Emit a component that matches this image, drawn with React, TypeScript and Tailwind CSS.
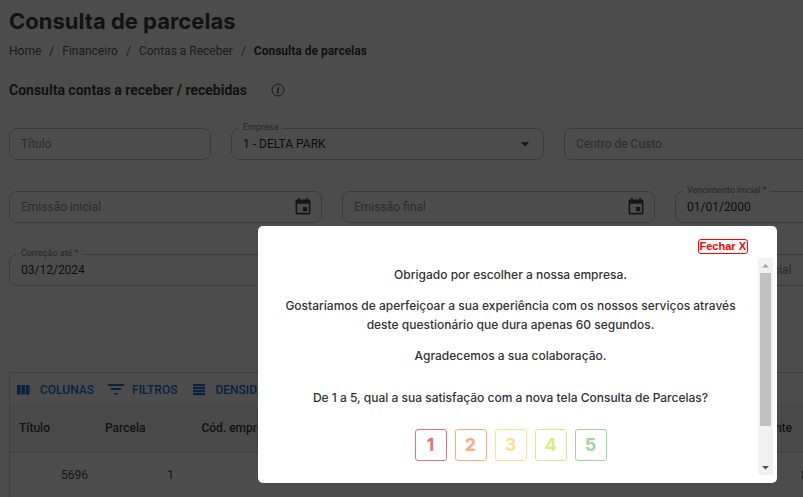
import type { ReactNode } from "react";
import { MdArrowDropDown, MdEvent } from "react-icons/md";

const roboto = "font-['Roboto','Liberation_Sans',sans-serif]";

type FieldProps = {
  id: string;
  label: string;
  value?: string;
  span: string;
  date?: boolean;
};

function FloatingLabel({ id, children }: { id: string; children: ReactNode }) {
  return (
    <label
      htmlFor={id}
      className="absolute -top-2 left-[7px] bg-white px-1 text-[9px] leading-3 text-[#808080]"
    >
      {children}
    </label>
  );
}

function Field({ id, label, value, span, date }: FieldProps) {
  return (
    <div className={`relative flex h-8 items-center rounded-lg border border-[#c4c4c4] ${span}`}>
      {value && <FloatingLabel id={id}>{label}</FloatingLabel>}
      <input
        id={id}
        type="text"
        aria-label={label}
        placeholder={value ? undefined : label}
        defaultValue={value}
        className="h-full min-w-0 flex-1 bg-transparent pl-[11px] text-xs text-[#303030] outline-none placeholder:text-[#949494]"
      />
      {date && (
        <button type="button" aria-label={`Escolher data: ${label}`} className="mr-2 text-[#4c4c4c]">
          <MdEvent className="size-5" />
        </button>
      )}
    </div>
  );
}

function ColumnsIcon() {
  return (
    <svg viewBox="0 0 16 16" className="size-4" fill="currentColor" aria-hidden="true">
      <path d="M1 3h3.700v9.500H1zM5.400 3h3.700v9.500H5.400zM9.800 3h3.700v9.500H9.800z" />
    </svg>
  );
}

function FilterIcon() {
  return (
    <svg viewBox="0 0 16 16" className="size-4" fill="currentColor" aria-hidden="true">
      <path d="M0 2h16v2H0zM3 6h10v2H3zM6 11h4v1.500H6z" />
    </svg>
  );
}

function DensityIcon() {
  return (
    <svg viewBox="0 0 16 16" className="size-4" fill="currentColor" aria-hidden="true">
      <path d="M2 2h12v2.200H2zM2 5h12v2.200H2zM2 8h12v2.200H2zM2 11h12v2.200H2z" />
    </svg>
  );
}

function ToolbarButton({ icon, children }: { icon: ReactNode; children: ReactNode }) {
  return (
    <button type="button" className="flex items-center gap-2 text-xs leading-4 font-medium text-[#1976d2]">
      {icon}
      {children}
    </button>
  );
}

const ratings = [
  { value: 1, style: "border-[#e57373] text-[#e57373]" },
  { value: 2, style: "border-[#ffab7d] text-[#ffab7d]" },
  { value: 3, style: "border-[#ffe08a] text-[#ffe08a]" },
  { value: 4, style: "border-[#dcea86] text-[#dcea86]" },
  { value: 5, style: "border-[#9fd39b] text-[#9fd39b]" },
];

function SurveyDialog() {
  return (
    <div className="fixed inset-0 flex items-end justify-end bg-black/70 pr-[26px] pb-3.5">
      <section
        role="dialog"
        aria-label="Pesquisa de satisfação"
        className="flex w-full max-w-[519px] flex-col rounded-[5px] bg-white pr-1 pb-2 pl-[5px] font-['Inter','Liberation_Sans',sans-serif] text-[#333]"
      >
        <div className="flex justify-end pt-[13px] pr-[25px] pb-1">
          <button
            type="button"
            className="rounded-[3px] border border-[#f00] px-px font-['Liberation_Sans',sans-serif] text-[11px] leading-[13px] font-bold text-[#f00]"
          >
            Fechar X
          </button>
        </div>
        <div className="flex">
          <div className="flex flex-1 flex-col items-center px-4 pt-[7px] text-center text-xs leading-[19px] font-medium">
            <p>Obrigado por escolher a nossa empresa.</p>
            <p className="mt-3">
              Gostaríamos de aperfeiçoar a sua experiência com os nossos serviços através deste questionário que dura
              apenas 60 segundos.
            </p>
            <p className="mt-3">Agradecemos a sua colaboração.</p>
            <p className="mt-[23px]">De 1 a 5, qual a sua satisfação com a nova tela Consulta de Parcelas?</p>
            <div className="mt-[22px] mb-3.5 flex gap-2">
              {ratings.map((r) => (
                <button
                  key={r.value}
                  type="button"
                  className={`size-8 rounded-[3px] border text-lg leading-none font-bold ${r.style}`}
                >
                  {r.value}
                </button>
              ))}
            </div>
          </div>
          <div className="flex w-[15px] flex-col items-center bg-[#f1f1f1]" aria-hidden="true">
            <svg viewBox="0 0 15 15" className="size-[15px]" fill="#a3a3a3">
              <path d="M4 9.500L7.500 6L11 9.500z" />
            </svg>
            <div className="w-[11px] flex-1 bg-[#c1c1c1]" />
            <svg viewBox="0 0 15 15" className="mt-[34px] size-[15px]" fill="#505050">
              <path d="M4 6L7.500 9.500L11 6z" />
            </svg>
          </div>
        </div>
      </section>
    </div>
  );
}

export default function App() {
  return (
    <div className={`h-screen overflow-hidden bg-white ${roboto} text-[#333]`}>
      <main className="min-w-[1321px] pt-2 pl-[9px]">
        <h1 className="font-['Inter','Liberation_Sans',sans-serif] text-[22px] leading-[26px] font-bold text-[#3c3c3c]">
          Consulta de parcelas
        </h1>
        <nav aria-label="Navegação" className="mt-2 flex gap-2 text-xs leading-[18px] text-[#606060]">
          <a href="#home">Home</a>
          <span>/</span>
          <a href="#financeiro">Financeiro</a>
          <span>/</span>
          <a href="#contas">Contas a Receber</a>
          <span>/</span>
          <span aria-current="page" className="font-bold text-[#3c3c3c]">
            Consulta de parcelas
          </span>
        </nav>
        <div className="mt-5 flex items-center gap-6">
          <h2 className="text-sm leading-5 font-bold text-[#3c3c3c]">Consulta contas a receber / recebidas</h2>
          <button type="button" aria-label="Informações" className="text-[#4c4c4c]">
            <svg viewBox="0 0 14 14" className="size-3.5" fill="none" stroke="currentColor" aria-hidden="true">
              <circle cx="7" cy="7" r="6" />
              <path d="M6.200 5.800h1.200L6.500 10h1M7.600 3.500l-.2 1" strokeWidth="1.200" />
            </svg>
          </button>
        </div>

        <form className="mt-7 grid grid-cols-12 gap-x-5 gap-y-[31px]">
          <Field id="titulo" label="Título" span="col-span-2" />
          <div className="relative col-span-3 flex h-8 items-center rounded-lg border border-[#c4c4c4]">
            <FloatingLabel id="empresa">Empresa</FloatingLabel>
            <select
              id="empresa"
              className="h-full w-full appearance-none bg-transparent pl-[11px] text-xs text-[#303030] outline-none"
            >
              <option>1 - DELTA PARK</option>
            </select>
            <MdArrowDropDown className="pointer-events-none absolute right-2 size-5 text-[#4c4c4c]" />
          </div>
          <Field id="centro" label="Centro de Custo" span="col-span-3" />
          <div className="col-span-4" />
          <Field id="emissao-inicial" label="Emissão inicial" span="col-span-3" date />
          <Field id="emissao-final" label="Emissão final" span="col-span-3" date />
          <Field id="vencimento" label="Vencimento inicial *" value="01/01/2000" span="col-span-3" date />
          <div className="col-span-3" />
          <Field id="correcao" label="Correção até *" value="03/12/2024" span="col-span-3" date />
          <div className="col-span-3" />
          <Field id="recebimento" label="Recebimento inicial" span="col-span-3" date />
        </form>

        <div className="mt-[86px] border border-[#d8d8d8]">
          <div className="flex h-[31px] items-center gap-3.5 pt-[3px] pl-1.5">
            <ToolbarButton icon={<ColumnsIcon />}>COLUNAS</ToolbarButton>
            <ToolbarButton icon={<FilterIcon />}>FILTROS</ToolbarButton>
            <ToolbarButton icon={<DensityIcon />}>DENSIDADE</ToolbarButton>
          </div>
          <table className="w-full table-fixed">
            <colgroup>
              <col className="w-[86px]" />
              <col className="w-[86px]" />
              <col className="w-[120px]" />
              <col />
              <col className="w-[140px]" />
              <col className="w-[480px]" />
            </colgroup>
            <thead>
              <tr className="h-12 border-b border-[#d8d8d8] bg-[#f5f5f5] text-xs text-[#404040]">
                <th className="pl-[9px] text-left font-medium">Título</th>
                <th className="pl-[9px] text-left font-medium">Parcela</th>
                <th className="pr-[26px] text-right font-medium">Cód. empresa</th>
                <th />
                <th className="pr-12 text-right font-medium">Cód. cliente</th>
                <th />
              </tr>
            </thead>
            <tbody>
              <tr className="h-[46px] text-xs text-[#505050]">
                <td className="pr-2 text-right">5696</td>
                <td className="pr-2 text-right">1</td>
                <td />
                <td />
                <td className="pr-3 text-right">8104</td>
                <td />
              </tr>
            </tbody>
          </table>
        </div>
      </main>
      <SurveyDialog />
    </div>
  );
}
